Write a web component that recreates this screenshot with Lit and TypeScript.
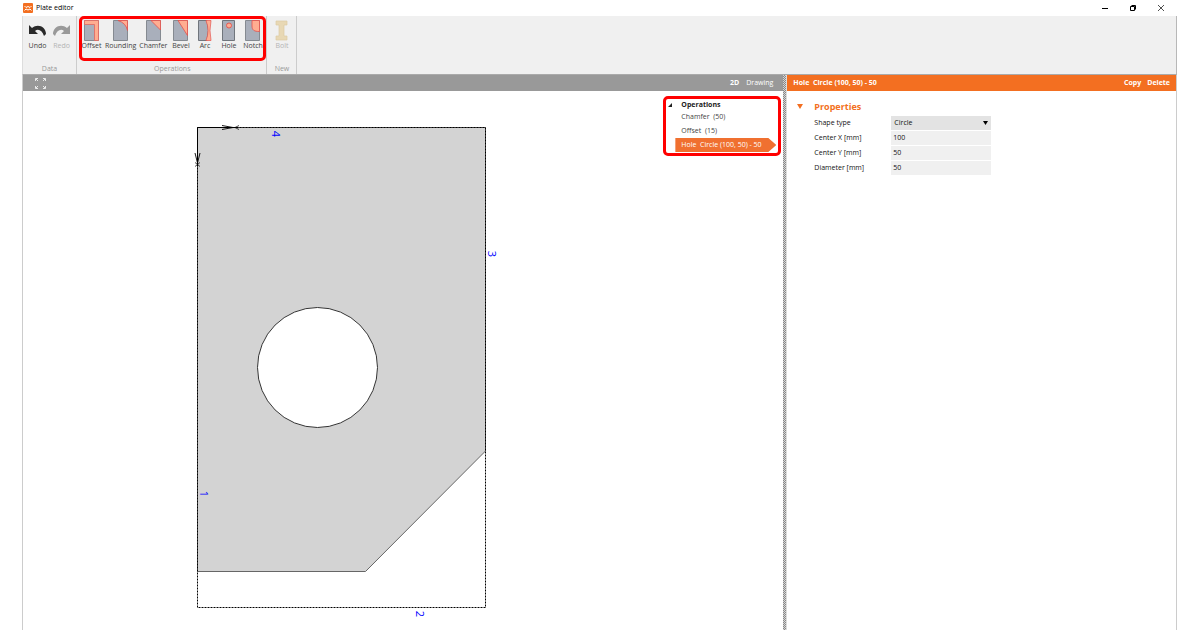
import { LitElement, html, svg, css } from "lit";
import { customElement, state } from "lit/decorators.js";

const plate = svg`<path d="M.5 .5h14v20h-14z" fill="#a9afbb" stroke="#858a91"/>`;

const tools = [
  { name: "Offset", art: svg`${plate}<path d="M.5 .5h14v20h-4V4.500H.5z" fill="#ffad91" stroke="#e06660" stroke-width=".8"/>` },
  { name: "Rounding", art: svg`${plate}<path d="M5 .5h9.500v10Q13 3 5 .5z" fill="#ffad91" stroke="#e4504c" stroke-width=".8"/>` },
  { name: "Chamfer", art: svg`${plate}<path d="M5 .5h9.500v9.500z" fill="#ffad91" stroke="#e4504c" stroke-width=".8"/>` },
  { name: "Bevel", art: svg`${plate}<path d="M5 .5h9.500v15z" fill="#ffad91" stroke="#e4504c" stroke-width=".8"/>` },
  { name: "Arc", art: svg`<path d="M10 .5H1.500v20H10q3-10 0-20z" fill="#a9afbb" stroke="#70757c"/><path d="M9 .5h5q-2 10 0 20H9q4-10 0-20z" fill="#ffad91" stroke="#e4504c" stroke-width=".7"/>` },
  { name: "Hole", art: svg`<path d="M1.500 .5h12v20h-12z" fill="#a9afbb" stroke="#70757c"/><circle cx="8" cy="5.500" r="2.500" fill="#ffad91" stroke="#e4504c" stroke-width=".9"/>` },
  { name: "Notch", art: svg`${plate}<path d="M7 .5h7.500v11C9 11.500 7 10 7 6z" fill="#ffad91" stroke="#e4504c" stroke-width=".8"/>` },
];

@customElement("app-root")
export class AppRoot extends LitElement {
  static styles = css`
    :host {
      display: block;
      height: 100vh;
      overflow: hidden;
      background: #fff;
      color: #222;
      font: 7px/10px "Open Sans", "Noto Sans", sans-serif;
    }
    * { box-sizing: border-box; }
    button, input, select {
      font: inherit;
      color: inherit;
      border: 0;
      border-radius: 0;
      padding: 0;
      margin: 0;
      background: none;
    }
    svg { display: block; flex: none; }
    .window { height: 100%; display: flex; flex-direction: column; padding: 0 23px 0 22px; }
    .title { height: 16px; flex: none; display: flex; align-items: center; gap: 3px; color: #000; padding-left: 1px; }
    .title h1 { font: inherit; margin: 0; flex: 1; }
    .win { display: flex; gap: 20px; padding-right: 12px; }
    .ribbon {
      height: 59px;
      flex: none;
      display: flex;
      background: #f0f0f0;
      border-right: 1px solid #b8b8b8;
      border-left: 1px solid #ddd;
      border-bottom: 1px solid #aaa;
    }
    .group {
      position: relative;
      display: flex;
      flex-direction: column;
      justify-content: space-between;
      border-right: 1px solid #ccc;
      padding: 3px 4px 0;
    }
    .group.ops { padding: 3px 3px 0 4px; }
    .tools { display: flex; gap: 3px; justify-content: center; }
    .tool { display: flex; flex-direction: column; align-items: center; min-width: 21px; color: #444; }
    .tool .art { height: 22px; display: flex; align-items: center; }
    .tool:disabled { color: #b4b4b4; }
    .caption { text-align: center; color: #999; line-height: 11px; }
    .mark {
      position: absolute;
      border: 3px solid #f00;
      border-radius: 5px;
      pointer-events: none;
    }
    .mark.ring { inset: 0 0 13px 2px; }
    .body { flex: 1; min-height: 0; display: flex; }
    .view { flex: 761 1 0; min-width: 0; display: flex; flex-direction: column; border-left: 1px solid #ccc; }
    .bar { height: 16px; flex: none; display: flex; align-items: center; color: #fff; background: #999; }
    .view .bar { padding: 0 10px 0 11px; gap: 7px; }
    .fit { margin-right: auto; }
    .bold { font-weight: 700; }
    .canvas { position: relative; flex: 1; min-height: 0; overflow: hidden; }
    .tree {
      position: absolute;
      top: 5px;
      right: 2px;
      width: 118px;
      height: 60px;
      border: 3px solid #f00;
      border-radius: 5px;
      padding: 0 2px 0 1px;
    }
    .tree ul { list-style: none; margin: 0; padding: 0 0 0 8px; }
    .node { display: flex; align-items: center; gap: 9px; height: 11px; line-height: 9px; padding-left: 1px; font-weight: 700; }
    .leaf { display: block; width: 100%; height: 14px; padding-left: 6px; text-align: left; white-space: pre; color: #444; }
    .leaf.on {
      color: #fff;
      background: #f07030;
      clip-path: polygon(0 0, calc(100% - 8px) 0, 100% 50%, calc(100% - 8px) 100%, 0 100%);
    }
    .split {
      width: 4px;
      flex: none;
      background: repeating-conic-gradient(#888 0 25%, #d4d4d4 0 50%) 0 0 / 2px 2px;
      border-right: 1px solid #ddd;
    }
    .side { flex: 389 1 0; min-width: 0; border-right: 1px solid #ccc; }
    .side .bar { background: #f36f21; padding: 0 6px; gap: 6px; font-weight: 700; white-space: pre; }
    .side .bar span { flex: 1; }
    .props { padding: 10px; display: grid; grid-template-columns: 17px 77px 100px; row-gap: 1px; align-items: center; color: #111; }
    .props h2 { display: flex; align-items: center; gap: 10px; grid-column: 1 / -1; margin: 0; height: 12px; font-size: 9px; line-height: 12px; color: #f36f21; margin-bottom: 2px; }
    .props label { grid-column: 2; font-weight: 500; }
    .field, .pick select { display: block; width: 100%; height: 14px; background: #f0f0f0; padding: 0 2px 1px; font-weight: 500; }
    .pick { position: relative; }
    .pick select { appearance: none; padding: 0 3px; background: #e3e3e3; }
    .pick svg { position: absolute; right: 3px; top: 5px; pointer-events: none; }
    .digit { font: 11px "Open Sans", sans-serif; fill: #00f; text-anchor: middle; }
  `;

  @state() private selected = 2;

  private nodes = ["Chamfer  (50)", "Offset  (15)", "Hole  Circle (100, 50) - 50"];

  private edges = [
    { n: 1, x: 200, y: 494 },
    { n: 2, x: 416, y: 614 },
    { n: 3, x: 488, y: 254 },
    { n: 4, x: 272, y: 134 },
  ];

  private drawing() {
    return html`<svg width="761" height="539" viewBox="23 91 761 539" role="img" aria-label="Plate outline">
      <path d="M197.500 127.500H485.500V451L365.500 571.500H197.500z" fill="#d3d3d3" stroke="#666"/>
      <path d="M197.500 127.500H485.500V607.500H197.500z" fill="none" stroke="#000" stroke-dasharray="2 1"/>
      <circle cx="317.500" cy="367.500" r="60" fill="#fff" stroke="#333"/>
      <g fill="none" stroke="#000">
        <path d="M197.500 164V127.500H238"/>
        <path d="M222 125.500l11 2l-11 2M195 153l2.500 10l2.500-10" stroke-width=".9"/>
        <path d="M235 127.500l4-2m-4 2l4 2M195 162.500l5 4m0-4l-5 4" stroke-width=".7"/>
      </g>
      ${this.edges.map(
        (e) => svg`<text class="digit" transform="translate(${e.x} ${e.y}) rotate(90)">${e.n}</text>`
      )}
    </svg>`;
  }

  render() {
    return html`<div class="window">
      <header class="title">
        <svg width="10" height="10" viewBox="0 0 10 10">
          <rect width="10" height="10" rx="1" fill="#f36f21"/>
          <path d="M1.500 3l1.500 1.500L5 3.500l2 1L8.500 3M1.500 7.500L3 6l2 1L7 6l1.500 1.500" fill="none" stroke="#fff"/>
        </svg>
        <h1>Plate editor</h1>
        <div class="win">
          <button aria-label="Minimize"><svg width="8" height="8"><path d="M1 4.500h6" stroke="#000"/></svg></button>
          <button aria-label="Restore"><svg width="8" height="8" fill="none" stroke="#000"><path d="M1.500 2.500h4v4h-4zM2.500 1.500h4v4"/></svg></button>
          <button aria-label="Close"><svg width="8" height="8"><path d="M1 1l6 6M7 1l-6 6" stroke="#222" stroke-width=".8"/></svg></button>
        </div>
      </header>

      <nav class="ribbon">
        <div class="group">
          <div class="tools">
            <button class="tool">
              <span class="art"><svg width="19" height="13" viewBox="0 0 19 13"><path d="M1 1v9h9L7 7C10 4.500 14 6 16 12L18 10C18 3 10-1 4 4z" fill="#2a2a2a"/></svg></span>Undo
            </button>
            <button class="tool" disabled>
              <span class="art"><svg width="19" height="13" viewBox="0 0 19 13"><path d="M18 1v9H9l3-3C9 4.500 5 6 3 12L1 10C1 3 9-1 15 4z" fill="#999"/></svg></span>Redo
            </button>
          </div>
          <div class="caption">Data</div>
        </div>
        <div class="group ops">
          <div class="tools">
            ${tools.map(
              (t) => html`<button class="tool">
                <span class="art"><svg width="15" height="21" viewBox="0 0 15 21">${t.art}</svg></span>${t.name}
              </button>`
            )}
          </div>
          <div class="caption">Operations</div>
          <div class="mark ring"></div>
        </div>
        <div class="group">
          <div class="tools">
            <button class="tool" disabled>
              <span class="art"><svg width="13" height="21" viewBox="0 0 13 21"><path d="M1 1h11v4H9v11h3v4H1v-4h3V5H1z" fill="#e8d8b4" stroke="#dccba4" stroke-width=".7"/></svg></span>Bolt
            </button>
          </div>
          <div class="caption">New</div>
        </div>
      </nav>

      <main class="body">
        <section class="view">
          <div class="bar">
            <button class="fit" aria-label="Zoom to fit">
              <svg width="13" height="13" viewBox="0 0 13 13" fill="none" stroke="#fff">
                <path d="M1.500 4V1.500H4M2 2l2 2M9 1.500h2.500V4M11 2L9 4M1.500 9v2.500H4M2 11l2-2M9 11.500h2.500V9M11 11L9 9" stroke-width=".8"/>
              </svg>
            </button>
            <button class="bold">2D</button>
            <button>Drawing</button>
          </div>
          <div class="canvas">
            ${this.drawing()}
            <div class="tree">
              <div class="node">
                <svg width="4" height="4"><path d="M4 0v4H0z" fill="#222"/></svg>Operations
              </div>
              <ul>
                ${this.nodes.map(
                  (n, i) => html`<li><button class="leaf ${i === this.selected ? "on" : ""}" @click=${() => (this.selected = i)}>${n}</button></li>`
                )}
              </ul>
            </div>
          </div>
        </section>
        <div class="split"></div>
        <aside class="side">
          <div class="bar"><span>${this.nodes[this.selected]}</span><button class="bold">Copy</button><button class="bold">Delete</button></div>
          <form class="props">
            <h2><svg width="7" height="6"><path d="M0 0h6L3 5z" fill="#f36f21"/></svg>Properties</h2>
            <label for="shape">Shape type</label>
            <div class="pick">
              <select id="shape"><option>Circle</option></select>
              <svg width="5" height="4"><path d="M0 0h5L2.500 4z" fill="#000"/></svg>
            </div>
            <label for="cx">Center X [mm]</label><input class="field" id="cx" value="100">
            <label for="cy">Center Y [mm]</label><input class="field" id="cy" value="50">
            <label for="dia">Diameter [mm]</label><input class="field" id="dia" value="50">
          </form>
        </aside>
      </main>
    </div>`;
  }
}
